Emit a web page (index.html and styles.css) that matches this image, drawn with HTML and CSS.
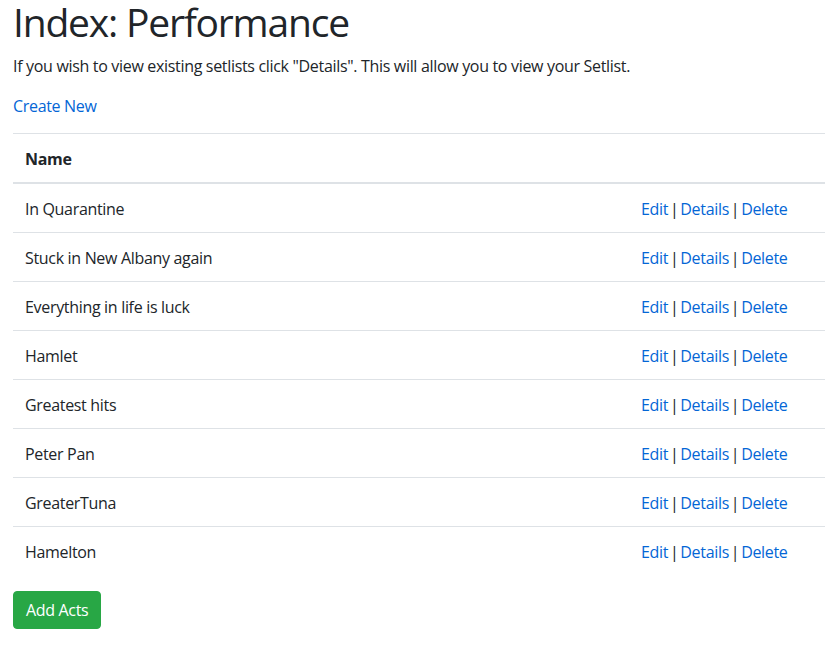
FILE: index.html
```html
<!DOCTYPE html>
<html lang="en">
<head>
<meta charset="utf-8">
<title>Index: Performance</title>
<link rel="stylesheet" href="styles.css">
</head>
<body>
<main class="page">
  <h1 class="title">Index: Performance</h1>
  <p class="intro">If you wish to view existing setlists click "Details". This will allow you to view your Setlist.</p>
  <p class="create"><a href="#">Create New</a></p>
  <table class="table">
    <thead>
      <tr><th class="col-name">Name</th><th class="col-actions"></th></tr>
    </thead>
    <tbody>
      <tr><td>In Quarantine</td><td class="actions"><a href="#">Edit</a> | <a href="#">Details</a> | <a href="#">Delete</a></td></tr>
      <tr><td>Stuck in New Albany again</td><td class="actions"><a href="#">Edit</a> | <a href="#">Details</a> | <a href="#">Delete</a></td></tr>
      <tr><td>Everything in life is luck</td><td class="actions"><a href="#">Edit</a> | <a href="#">Details</a> | <a href="#">Delete</a></td></tr>
      <tr><td>Hamlet</td><td class="actions"><a href="#">Edit</a> | <a href="#">Details</a> | <a href="#">Delete</a></td></tr>
      <tr><td>Greatest hits</td><td class="actions"><a href="#">Edit</a> | <a href="#">Details</a> | <a href="#">Delete</a></td></tr>
      <tr><td>Peter Pan</td><td class="actions"><a href="#">Edit</a> | <a href="#">Details</a> | <a href="#">Delete</a></td></tr>
      <tr><td>GreaterTuna</td><td class="actions"><a href="#">Edit</a> | <a href="#">Details</a> | <a href="#">Delete</a></td></tr>
      <tr><td>Hamelton</td><td class="actions"><a href="#">Edit</a> | <a href="#">Details</a> | <a href="#">Delete</a></td></tr>
    </tbody>
  </table>
  <button class="btn-success" type="button">Add Acts</button>
</main>
</body>
</html>
```

FILE: styles.css
```css
html, body {
  margin: 0;
  padding: 0;
  background: #fff;
}
body {
  font-family: "Open Sans", "Noto Sans", "Liberation Sans", sans-serif;
  font-size: 16px;
  line-height: 24px;
  letter-spacing: -0.32px;
  color: #212529;
  overflow: hidden;
}
.page {
  padding: 0 0 0 13px;
}
a {
  color: #0366d6;
  text-decoration: none;
}
.title {
  font-size: 39px;
  font-weight: 400;
  line-height: 44px;
  letter-spacing: -1.2px;
  margin: 0 0 10px;
}
.intro {
  margin: 0 0 16px;
}
.create {
  margin: 0 0 15px;
}
.table {
  width: 830px;
  border-collapse: collapse;
  margin-bottom: 16px;
}
.table th,
.table td {
  padding: 13px 12px 11px;
  text-align: left;
  vertical-align: top;
  border-top: 1px solid #dee2e6;
}
.table thead th {
  border-bottom: 2px solid #dee2e6;
  font-weight: 700;
}
.col-name {
  width: 592px;
}
.actions {
  word-spacing: -2px;
}
.btn-success {
  font-family: inherit;
  font-size: 16px;
  line-height: 24px;
  letter-spacing: -0.32px;
  color: #fff;
  background: #28a745;
  border: 1px solid #28a745;
  border-radius: 4px;
  padding: 6px 12px;
  cursor: pointer;
}
```
